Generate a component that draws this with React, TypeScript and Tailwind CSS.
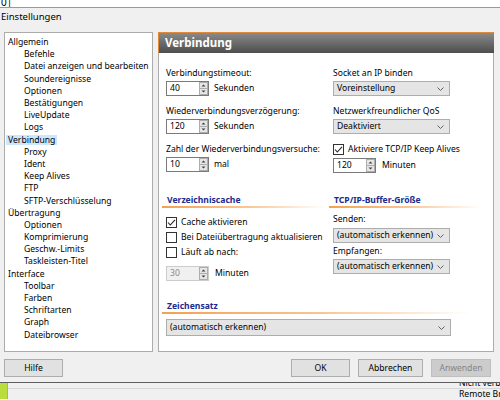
import type { ReactNode } from 'react';

type TreeItem = { label: string; child?: boolean; selected?: boolean };

const tree: TreeItem[] = [
  { label: 'Allgemein' },
  { label: 'Befehle', child: true },
  { label: 'Datei anzeigen und bearbeiten', child: true },
  { label: 'Soundereignisse', child: true },
  { label: 'Optionen', child: true },
  { label: 'Bestätigungen', child: true },
  { label: 'LiveUpdate', child: true },
  { label: 'Logs', child: true },
  { label: 'Verbindung', selected: true },
  { label: 'Proxy', child: true },
  { label: 'Ident', child: true },
  { label: 'Keep Alives', child: true },
  { label: 'FTP', child: true },
  { label: 'SFTP-Verschlüsselung', child: true },
  { label: 'Übertragung' },
  { label: 'Optionen', child: true },
  { label: 'Komprimierung', child: true },
  { label: 'Geschw.-Limits', child: true },
  { label: 'Taskleisten-Titel', child: true },
  { label: 'Interface' },
  { label: 'Toolbar', child: true },
  { label: 'Farben', child: true },
  { label: 'Schriftarten', child: true },
  { label: 'Graph', child: true },
  { label: 'Dateibrowser', child: true },
];

function SpinArrows() {
  return (
    <svg width="9" height="13" viewBox="0 0 9 13" className="block">
      <rect x="0.5" y="0.5" width="8" height="12" fill="#e6e6e6" stroke="#adadad" />
      <line x1="1" y1="6.5" x2="8" y2="6.5" stroke="#adadad" />
      <path d="M2.5 4.5 L4.5 2.5 L6.5 4.5 Z" fill="#404040" />
      <path d="M2.5 8.5 L4.5 10.5 L6.5 8.5 Z" fill="#404040" />
    </svg>
  );
}

function SpinBox({ value, disabled }: { value: string; disabled?: boolean }) {
  return (
    <div
      className={
        disabled
          ? 'flex h-[15px] w-[43px] items-center border border-[#cccccc] bg-[#f0f0f0] text-[#8a8a8a]'
          : 'flex h-[15px] w-[43px] items-center border border-[#7a7a7a] bg-white'
      }
    >
      <span className="flex-1 pl-[3px] leading-[13px]">{value}</span>
      <SpinArrows />
    </div>
  );
}

function Chevron() {
  return (
    <svg width="7" height="4" viewBox="0 0 7 4" className="block">
      <path d="M0.5 0.5 L3.5 3.5 L6.5 0.5" fill="none" stroke="#606060" strokeWidth="1" />
    </svg>
  );
}

function Select({ value, wide }: { value: string; wide?: boolean }) {
  return (
    <div
      className={
        (wide ? 'h-[17px] w-[285px] ' : 'h-[15px] w-[117px] ') +
        'flex items-center border border-[#adadad] bg-[#e5e5e5] pl-[3px] pr-[5px]'
      }
    >
      <span className="flex-1 whitespace-nowrap leading-[13px]">{value}</span>
      <Chevron />
    </div>
  );
}

function Checkbox({ checked, label }: { checked?: boolean; label: string }) {
  return (
    <div className="flex h-[15px] items-center whitespace-nowrap">
      <svg width="11" height="11" viewBox="0 0 11 11" className="block">
        <rect x="0.5" y="0.5" width="10" height="10" fill="white" stroke="#333333" />
        {checked && <path d="M2 5.5 L4.3 8 L9 2.8" fill="none" stroke="#222222" strokeWidth="1.1" />}
      </svg>
      <span className="ml-[4px]">{label}</span>
    </div>
  );
}

function SectionTitle({ title, line }: { title: string; line: string }) {
  return (
    <div className="-ml-[4px]">
      <div className="pl-[5px] text-[8.6px] font-bold leading-[12px] text-[#1a2a8e]">{title}</div>
      <div className={`h-[2px] bg-gradient-to-r from-[#f4a14f] via-[#f8c48f] to-transparent ${line}`} />
    </div>
  );
}

function Labelled({ label, children, top }: { label: string; children: ReactNode; top: string }) {
  return (
    <div className={top}>
      <div className="whitespace-nowrap leading-[12px]">{label}</div>
      <div className="mt-[2px] flex h-[15px] items-center">{children}</div>
    </div>
  );
}

function Button({ children, disabled, width }: { children: ReactNode; disabled?: boolean; width: string }) {
  return (
    <div
      className={
        `${width} flex h-[18px] items-center justify-center border ` +
        (disabled ? 'border-[#bfbfbf] bg-[#cccccc] text-[#858585]' : 'border-[#adadad] bg-[#e1e1e1]')
      }
    >
      {children}
    </div>
  );
}

export default function App() {
  return (
    <div className="relative h-[400px] w-[500px] overflow-hidden bg-[#f0f0f0] font-['Noto_Sans',sans-serif] text-[8.6px] text-black">
      {/* row of the list behind the dialog */}
      <div className="h-[8px] overflow-hidden border-b border-[#9a9a9a] bg-white">
        <div className="-mt-[4px] pl-[1px] text-[10px] leading-[12px]">0|</div>
      </div>

      <div className="mt-[3px] pl-[1px] text-[9.5px] leading-[12px]">Einstellungen</div>

      <div className="mt-[9px] flex h-[320px] pl-[4px]">
        {/* page tree */}
        <div className="w-[149px] border border-[#acacac] bg-white pt-[3px]">
          {tree.map((item, i) => (
            <div
              key={i}
              className={
                item.child
                  ? 'flex h-[12.2px] items-center whitespace-nowrap pl-[17px]'
                  : 'flex h-[12.2px] items-center whitespace-nowrap pl-[1px]'
              }
            >
              <span className={item.selected ? 'bg-[#cce8ff] px-[2px] leading-[10px]' : 'px-[2px] leading-[10px]'}>
                {item.label}
              </span>
            </div>
          ))}
        </div>

        {/* settings page */}
        <div className="ml-[5px] flex w-[336px] flex-col">
          <div className="flex h-[21px] items-center border-l border-t border-[#e0893a] bg-gradient-to-b from-[#8a8a8a] to-[#4e4e4e] pl-[6px] text-[11.5px] font-bold text-white">
            Verbindung
          </div>
          <div className="flex-1 border border-t-0 border-[#acacac] bg-white pl-[7px]">
            <div className="flex pt-[14px]">
              <div className="w-[167px]">
                <Labelled label="Verbindungstimeout:" top="">
                  <SpinBox value="40" />
                  <span className="ml-[5px]">Sekunden</span>
                </Labelled>
                <Labelled label="Wiederverbindungsverzögerung:" top="mt-[9px]">
                  <SpinBox value="120" />
                  <span className="ml-[5px]">Sekunden</span>
                </Labelled>
                <Labelled label="Zahl der Wiederverbindungsversuche:" top="mt-[9px]">
                  <SpinBox value="10" />
                  <span className="ml-[5px]">mal</span>
                </Labelled>
              </div>
              <div className="flex-1">
                <Labelled label="Socket an IP binden" top="">
                  <Select value="Voreinstellung" />
                </Labelled>
                <Labelled label="Netzwerkfreundlicher QoS" top="mt-[9px]">
                  <Select value="Deaktiviert" />
                </Labelled>
                <div className="mt-[8px]">
                  <Checkbox checked label="Aktiviere TCP/IP Keep Alives" />
                </div>
                <div className="mt-[1px] flex h-[15px] items-center">
                  <SpinBox value="120" />
                  <span className="ml-[6px]">Minuten</span>
                </div>
              </div>
            </div>

            <div className="mt-[21px] flex">
              <div className="w-[167px]">
                <SectionTitle title="Verzeichniscache" line="mr-[6px]" />
                <div className="mt-[7px]">
                  <Checkbox checked label="Cache aktivieren" />
                  <Checkbox label="Bei Dateiübertragung aktualisieren" />
                  <Checkbox label="Läuft ab nach:" />
                </div>
                <div className="mt-[6px] flex h-[15px] items-center">
                  <SpinBox value="30" disabled />
                  <span className="ml-[6px]">Minuten</span>
                </div>
              </div>
              <div className="flex-1">
                <SectionTitle title="TCP/IP-Buffer-Größe" line="mr-[12px]" />
                <div className="mt-[5px] leading-[12px]">Senden:</div>
                <div className="mt-[3px]">
                  <Select value="(automatisch erkennen)" />
                </div>
                <div className="mt-[2px] leading-[12px]">Empfangen:</div>
                <div className="mt-[2px]">
                  <Select value="(automatisch erkennen)" />
                </div>
              </div>
            </div>

            <div className="mt-[19px]">
              <SectionTitle title="Zeichensatz" line="mr-[22px]" />
              <div className="mt-[5px]">
                <Select value="(automatisch erkennen)" wide />
              </div>
            </div>
          </div>
        </div>
      </div>

      <div className="mt-[7px] flex pl-[4px] pr-[9px]">
        <Button width="w-[59px]">Hilfe</Button>
        <div className="flex-1" />
        <div className="flex gap-[8px]">
          <Button width="w-[59px]">OK</Button>
          <Button width="w-[65px]">Abbrechen</Button>
          <Button width="w-[60px]" disabled>
            Anwenden
          </Button>
        </div>
      </div>

      {/* main window peeking out under the dialog */}
      <div className="mt-[5px] flex h-[17px] border-t border-[#5e5e5e]">
        <div className="w-[7px] bg-[#b9dd3c]" />
        <div className="w-[1px] bg-[#a8a8a8]" />
        <div className="flex-1 overflow-hidden whitespace-nowrap">
          <div className="h-[6px] overflow-hidden border-b border-[#d6d6d6]">
            <div className="-mt-[6px] pl-[451px] leading-[12px]">Nicht verbunden</div>
          </div>
          <div className="pl-[451px] leading-[11px]">Remote Browser</div>
        </div>
      </div>
    </div>
  );
}
